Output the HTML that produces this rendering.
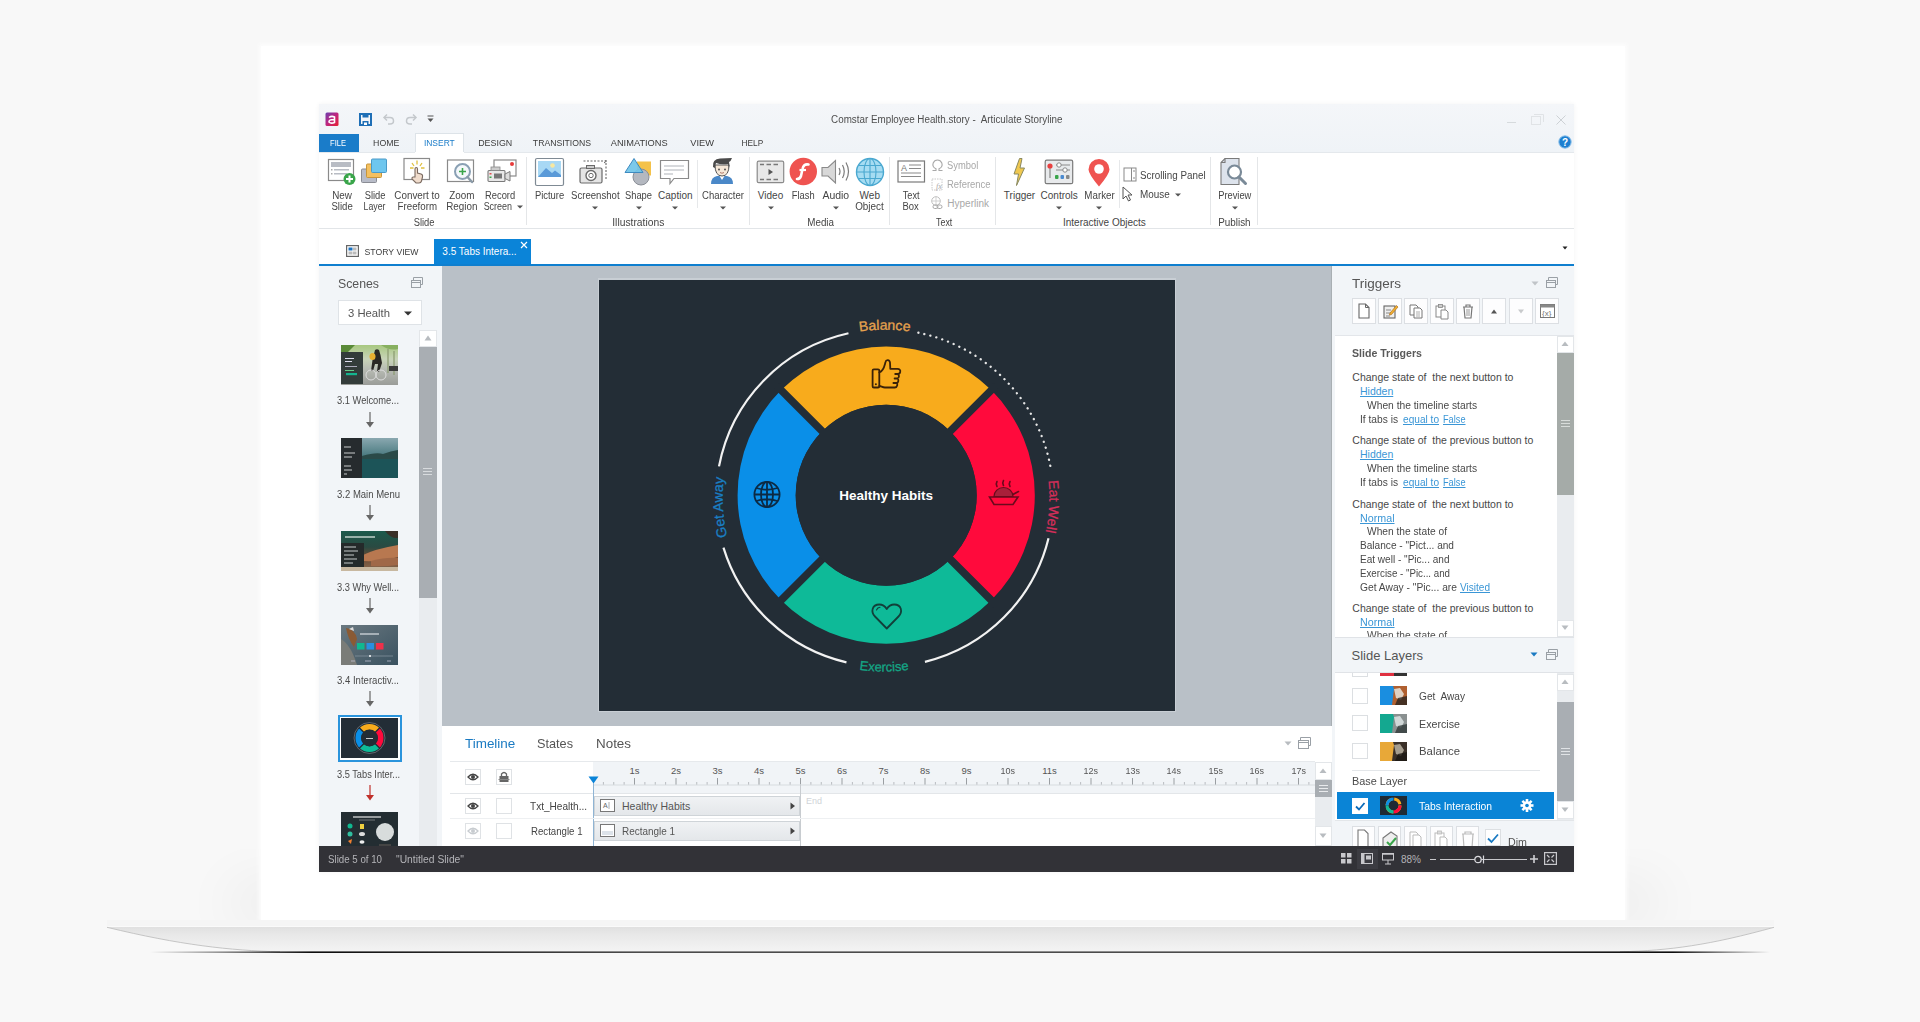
<!DOCTYPE html>
<html><head><meta charset="utf-8">
<style>
*{margin:0;padding:0;box-sizing:border-box}
html,body{width:1920px;height:1022px;overflow:hidden;background:#f8f8f8;font-family:"Liberation Sans",sans-serif}
#root{position:relative;width:1920px;height:1022px;overflow:hidden;background:#f8f8f8}
.a{position:absolute}
.t{position:absolute;white-space:pre;line-height:1;font-family:"Liberation Sans",sans-serif}
</style></head><body><div id="root">
<svg class="a" style="left:0px;top:780px" width="1920" height="200" viewBox="0 0 1920 200"><defs><filter id="sb" x="-20%" y="-100%" width="140%" height="300%"><feGaussianBlur stdDeviation="28"/></filter></defs><rect x="230" y="105" width="1430" height="36" fill="#000" opacity="0.06" filter="url(#sb)"/></svg>
<div class="a" style="left:261px;top:46px;width:1364px;height:874px;background:#fff;box-shadow:0 0 4px 2px #fdfdfd"></div>
<svg class="a" style="left:90px;top:912px" width="1710" height="50" viewBox="0 0 1710 50">
<defs>
<linearGradient id="bg1" x1="0" y1="0" x2="0" y2="1"><stop offset="0" stop-color="#e0e0e0"/><stop offset="0.3" stop-color="#e8e8e8"/><stop offset="1" stop-color="#f4f4f4"/></linearGradient>
<linearGradient id="dl" gradientUnits="userSpaceOnUse" x1="60" y1="0" x2="1680" y2="0"><stop offset="0" stop-color="#000" stop-opacity="0"/><stop offset="0.1" stop-color="#000" stop-opacity="0.95"/><stop offset="0.3" stop-color="#000" stop-opacity="0.7"/><stop offset="0.7" stop-color="#000" stop-opacity="0.7"/><stop offset="0.94" stop-color="#000" stop-opacity="0.95"/><stop offset="1" stop-color="#000" stop-opacity="0"/></linearGradient>
<filter id="bl"><feGaussianBlur stdDeviation="0.6"/></filter>
</defs>
<rect x="17" y="8" width="1667" height="7" fill="#f5f5f5"/>
<rect x="17" y="14" width="1667" height="1" fill="#fafafa"/>
<path d="M17 15 L1684 15 C1620 33 1580 38 1530 39.5 L190 40 C140 38 90 33 17 15 Z" fill="url(#bg1)"/>
<path d="M17 15.3 C90 33 140 38.5 190 39.8" fill="none" stroke="#b8b8b8" stroke-width="0.8"/>
<path d="M1684 15.3 C1620 33 1580 38.5 1530 39.8" fill="none" stroke="#b8b8b8" stroke-width="0.8"/>
<rect x="60" y="39.4" width="1620" height="1.6" fill="url(#dl)" filter="url(#bl)"/>
</svg>
<div class="a" style="left:319px;top:104px;width:1255px;height:768px;background:#fff;box-shadow:0 0 5px rgba(0,0,0,0.05)"></div>
<div class="a" style="left:319px;top:104px;width:1255px;height:48px;background:linear-gradient(180deg,#f4f6f9 0%,#eff3f7 100%)"></div>
<svg class="a" style="left:325px;top:112px" width="14" height="14" viewBox="0 0 14 14"><defs><linearGradient id="lg" x1="0" y1="0" x2="1" y2="1"><stop offset="0" stop-color="#6a3fb0"/><stop offset="0.5" stop-color="#c0267e"/><stop offset="1" stop-color="#e8202e"/></linearGradient></defs>
<rect x="0.5" y="0.5" width="13" height="13.5" rx="1.5" fill="url(#lg)"/>
<path d="M4 5.5 Q6.5 3.5 9.5 5 L9.5 10.5 Q6 12 4 10 Q3.5 7.5 9 7.5" fill="none" stroke="#fff" stroke-width="1.6"/></svg>
<svg class="a" style="left:359px;top:113px" width="13" height="13" viewBox="0 0 13 13"><rect x="1" y="1" width="11" height="11" fill="none" stroke="#1f6fb6" stroke-width="2"/><rect x="3.5" y="1" width="6" height="3.5" fill="#1f6fb6"/><rect x="3.5" y="8" width="6" height="4" fill="#1f6fb6"/><rect x="5" y="9.5" width="3" height="2.5" fill="#fff"/></svg>
<svg class="a" style="left:382px;top:113px" width="13" height="12" viewBox="0 0 13 12"><path d="M2.5 4.5 H8 Q11.5 4.5 11.5 8 Q11.5 11 8 11 H6" fill="none" stroke="#c4c8cc" stroke-width="1.5"/><path d="M5 1.5 L2 4.5 L5 7.5" fill="none" stroke="#c4c8cc" stroke-width="1.5"/></svg>
<svg class="a" style="left:405px;top:113px" width="13" height="12" viewBox="0 0 13 12"><path d="M10.5 4.5 H5 Q1.5 4.5 1.5 8 Q1.5 11 5 11 H7" fill="none" stroke="#c4c8cc" stroke-width="1.5"/><path d="M8 1.5 L11 4.5 L8 7.5" fill="none" stroke="#c4c8cc" stroke-width="1.5"/></svg>
<svg class="a" style="left:427px;top:115px" width="7" height="8" viewBox="0 0 7 8"><rect x="0.5" y="0.5" width="6" height="1" fill="#555"/><path d="M0.5 3.5 H6.5 L3.5 7Z" fill="#555"/></svg>
<div class="t" style="left:829.18px;top:115.20px;font-size:10px;color:#4e4e4e;transform:scaleX(0.982);transform-origin:50% 0;">Comstar Employee Health.story -  Articulate Storyline</div>
<div class="a" style="left:1507px;top:122px;width:9px;height:1px;background:#d6dadd"></div>
<svg class="a" style="left:1531px;top:114px" width="13" height="11" viewBox="0 0 13 11"><rect x="0.5" y="2.5" width="9" height="8" fill="none" stroke="#e0e3e6"/><path d="M3 0.5 H12.5 V8" fill="none" stroke="#e0e3e6"/></svg>
<svg class="a" style="left:1555px;top:114px" width="12" height="12" viewBox="0 0 12 12"><path d="M1.5 1.5 L10.5 10.5 M10.5 1.5 L1.5 10.5" stroke="#cdd1d5" stroke-width="1"/></svg>
<svg class="a" style="left:1558px;top:135px" width="14" height="14" viewBox="0 0 14 14"><circle cx="7" cy="7" r="6.2" fill="#1d7fd0" stroke="#8cc0ea" stroke-width="1"/><text x="7" y="10.8" font-family="Liberation Sans" font-weight="bold" font-size="10" fill="#fff" text-anchor="middle">?</text></svg>
<div class="a" style="left:319px;top:134px;width:40px;height:18px;background:#1a7cc9"></div>
<div class="t" style="left:328.47px;top:138.41px;font-size:9.5px;color:#fff;transform:scaleX(0.798);transform-origin:50% 0;">FILE</div>
<div class="a" style="left:415px;top:133px;width:49px;height:20px;background:#fff;border:1px solid #dde3e8;border-bottom:none"></div>
<div class="t" style="left:371.75px;top:138.11px;font-size:9.5px;color:#3c3c3c;transform:scaleX(0.923);transform-origin:50% 0;">HOME</div>
<div class="t" style="left:422.17px;top:138.11px;font-size:9.5px;color:#1a7cc9;transform:scaleX(0.889);transform-origin:50% 0;">INSERT</div>
<div class="t" style="left:476.99px;top:138.11px;font-size:9.5px;color:#3c3c3c;transform:scaleX(0.933);transform-origin:50% 0;">DESIGN</div>
<div class="t" style="left:530.07px;top:138.11px;font-size:9.5px;color:#3c3c3c;transform:scaleX(0.911);transform-origin:50% 0;">TRANSITIONS</div>
<div class="t" style="left:609.99px;top:138.11px;font-size:9.5px;color:#3c3c3c;transform:scaleX(0.974);transform-origin:50% 0;">ANIMATIONS</div>
<div class="t" style="left:690.36px;top:138.11px;font-size:9.5px;color:#3c3c3c;transform:scaleX(0.976);transform-origin:50% 0;">VIEW</div>
<div class="t" style="left:739.79px;top:138.11px;font-size:9.5px;color:#3c3c3c;transform:scaleX(0.870);transform-origin:50% 0;">HELP</div>
<div class="a" style="left:319px;top:152px;width:1255px;height:1px;background:#e4e8ec"></div>
<div class="a" style="left:415px;top:152px;width:49px;height:1px;background:#fff"></div>
<div class="a" style="left:319px;top:228px;width:1255px;height:1px;background:#e2e5e8"></div>
<svg class="a" style="left:346px;top:245px" width="13" height="12" viewBox="0 0 13 12"><rect x="0.6" y="0.6" width="11.8" height="10.8" fill="#fff" stroke="#666" stroke-width="1.2"/><rect x="2.5" y="2.5" width="4" height="3" fill="#1d72c0"/><rect x="7" y="2.5" width="3.5" height="3" fill="#bbb"/><rect x="2.5" y="6.5" width="4" height="3" fill="#bbb"/><rect x="7" y="6.5" width="3.5" height="3" fill="#bbb"/></svg>
<div class="t" style="left:361.94px;top:246.91px;font-size:9.5px;color:#3c3c3c;transform:scaleX(0.913);transform-origin:50% 0;">STORY VIEW</div>
<div class="a" style="left:434px;top:239px;width:97px;height:26px;background:#0b84d8"></div>
<div class="t" style="left:442.35px;top:247.00px;font-size:10px;color:#fff;transform-origin:50% 0;">3.5 Tabs Intera...</div>
<svg class="a" style="left:520px;top:241px" width="8" height="8" viewBox="0 0 8 8"><path d="M1 1 L7 7 M7 1 L1 7" stroke="#fff" stroke-width="1.2"/></svg>
<svg class="a" style="left:1562px;top:246px" width="6" height="5" viewBox="0 0 6 5"><path d="M0.5 0.5 H5.5 L3 3.5Z" fill="#222"/></svg>
<div class="a" style="left:319px;top:264px;width:1255px;height:2px;background:#0f7fcf"></div>
<div class="t" style="left:331.90px;top:190.70px;font-size:10px;color:#454545;transform:scaleX(0.985);transform-origin:50% 0;">New</div>
<div class="t" style="left:330.78px;top:202.00px;font-size:10px;color:#454545;transform:scaleX(0.958);transform-origin:50% 0;">Slide</div>
<div class="t" style="left:363.58px;top:190.70px;font-size:10px;color:#454545;transform:scaleX(0.935);transform-origin:50% 0;">Slide</div>
<div class="t" style="left:362.19px;top:202.00px;font-size:10px;color:#454545;transform:scaleX(0.876);transform-origin:50% 0;">Layer</div>
<div class="t" style="left:394.04px;top:190.70px;font-size:10px;color:#454545;transform:scaleX(0.984);transform-origin:50% 0;">Convert to</div>
<div class="t" style="left:396.82px;top:202.00px;font-size:10px;color:#454545;transform:scaleX(0.971);transform-origin:50% 0;">Freeform</div>
<div class="t" style="left:448.62px;top:190.70px;font-size:10px;color:#454545;transform:scaleX(0.986);transform-origin:50% 0;">Zoom</div>
<div class="t" style="left:445.56px;top:202.00px;font-size:10px;color:#454545;transform:scaleX(0.985);transform-origin:50% 0;">Region</div>
<div class="t" style="left:484.38px;top:190.70px;font-size:10px;color:#454545;transform:scaleX(0.934);transform-origin:50% 0;">Record</div>
<div class="t" style="left:481.66px;top:202.00px;font-size:10px;color:#454545;transform:scaleX(0.896);transform-origin:50% 0;">Screen</div>
<svg class="a" style="left:516.7px;top:205.4px" width="6" height="4" viewBox="0 0 6 4"><path d="M0 0.5 H6 L3 3.5Z" fill="#555"/></svg>
<div class="t" style="left:413.38px;top:217.50px;font-size:10px;color:#454545;transform:scaleX(0.935);transform-origin:50% 0;">Slide</div>
<div class="a" style="left:526px;top:157px;width:1px;height:68px;background:#e4e6e8"></div>
<svg class="a" style="left:327px;top:158px" width="30" height="28" viewBox="0 0 30 28"><rect x="1.5" y="1.5" width="25" height="21" fill="#fff" stroke="#8a8a8a" stroke-width="1.2"/>
<rect x="4" y="4" width="20" height="5" fill="#b8bcc4"/><rect x="4" y="11" width="1.5" height="1.5" fill="#aaa"/><rect x="7" y="11" width="15" height="1.5" fill="#b8bcc4"/><rect x="4" y="15" width="1.5" height="1.5" fill="#aaa"/><rect x="7" y="15" width="13" height="1.5" fill="#b8bcc4"/>
<circle cx="22.5" cy="21" r="6" fill="#3aa54a"/><path d="M22.5 17.5V24.5M19 21H26" stroke="#fff" stroke-width="2"/></svg>
<svg class="a" style="left:360px;top:158px" width="30" height="28" viewBox="0 0 30 28"><rect x="1.5" y="11" width="15" height="13.5" rx="1" fill="#b8bcc8" stroke="#8a8c94" stroke-width="1"/>
<rect x="6.5" y="6" width="15" height="13.5" rx="1" fill="#f4c060" stroke="#c8963a" stroke-width="1"/>
<rect x="11.5" y="1" width="15" height="13.5" rx="1" fill="#6ec6ee" stroke="#4a9ac8" stroke-width="1"/></svg>
<svg class="a" style="left:402px;top:157px" width="30" height="30" viewBox="0 0 30 30"><rect x="2" y="1.5" width="25.5" height="21" fill="#fff" stroke="#8a8a8a" stroke-width="1.2"/>
<path d="M10 6L12 9M15 3.5V7.5M20 6L18 9M8 11H11.5M19 11H22.5" stroke="#e0c040" stroke-width="1.3"/>
<path d="M13 20 V12 Q13 10.5 14.3 10.5 Q15.5 10.5 15.5 12 V16 L19 17 Q21 17.7 20.5 20 L19.5 24 Q19 26 17 26 H14 L10 22 Q9.5 20.5 11 20 Z" fill="#f0dccc" stroke="#7a6a60" stroke-width="1.1"/></svg>
<svg class="a" style="left:446px;top:158px" width="30" height="28" viewBox="0 0 30 28"><rect x="1.5" y="2" width="26" height="21.5" fill="#fff" stroke="#8a8a8a" stroke-width="1.2"/>
<circle cx="16.5" cy="13.5" r="7.5" fill="#f4f8fb" stroke="#8aa0b4" stroke-width="2"/><path d="M16.5 10V17M13 13.5H20" stroke="#3aa54a" stroke-width="1.6"/>
<path d="M21.5 19L26 24" stroke="#8a9aa8" stroke-width="2.4" stroke-linecap="round"/></svg>
<svg class="a" style="left:487px;top:158px" width="30" height="28" viewBox="0 0 30 28"><rect x="7" y="2" width="22" height="16" fill="#fff" stroke="#8a8a8a" stroke-width="1.2"/><circle cx="25" cy="6" r="2" fill="#e83a3a"/>
<rect x="1" y="12.5" width="17" height="11" rx="1" fill="#e8e8e8" stroke="#7a7a7a" stroke-width="1.1"/><rect x="4" y="9" width="9" height="3.5" fill="#ccc" stroke="#888" stroke-width="0.8"/>
<rect x="7" y="15.5" width="8" height="5" fill="#777"/><rect x="2.5" y="15" width="2" height="1.5" fill="#e05050"/><rect x="2.5" y="18.5" width="2" height="1.5" fill="#3aa54a"/>
<path d="M18 16 L23 13.5 V23 L18 20.5Z" fill="#ddd" stroke="#7a7a7a" stroke-width="1"/></svg>
<div class="t" style="left:534.34px;top:190.70px;font-size:10px;color:#454545;transform:scaleX(0.941);transform-origin:50% 0;">Picture</div>
<div class="t" style="left:569.51px;top:190.70px;font-size:10px;color:#454545;transform:scaleX(0.959);transform-origin:50% 0;">Screenshot</div>
<svg class="a" style="left:591.8px;top:206px" width="6" height="4" viewBox="0 0 6 4"><path d="M0 0.5 H6 L3 3.5Z" fill="#555"/></svg>
<div class="t" style="left:624.04px;top:190.70px;font-size:10px;color:#454545;transform:scaleX(0.934);transform-origin:50% 0;">Shape</div>
<svg class="a" style="left:635.5px;top:206px" width="6" height="4" viewBox="0 0 6 4"><path d="M0 0.5 H6 L3 3.5Z" fill="#555"/></svg>
<div class="t" style="left:658.07px;top:190.70px;font-size:10px;color:#454545;transform-origin:50% 0;">Caption</div>
<svg class="a" style="left:672.3px;top:206px" width="6" height="4" viewBox="0 0 6 4"><path d="M0 0.5 H6 L3 3.5Z" fill="#555"/></svg>
<div class="a" style="left:697px;top:160px;width:1px;height:48px;background:#e6e8ea"></div>
<div class="t" style="left:700.65px;top:190.70px;font-size:10px;color:#454545;transform:scaleX(0.954);transform-origin:50% 0;">Character</div>
<svg class="a" style="left:719.6px;top:206px" width="6" height="4" viewBox="0 0 6 4"><path d="M0 0.5 H6 L3 3.5Z" fill="#555"/></svg>
<div class="t" style="left:613.21px;top:217.50px;font-size:10px;color:#454545;transform:scaleX(1.030);transform-origin:50% 0;">Illustrations</div>
<div class="a" style="left:748.5px;top:157px;width:1px;height:68px;background:#e4e6e8"></div>
<svg class="a" style="left:534px;top:157px" width="31" height="30" viewBox="0 0 31 30"><rect x="1.5" y="1.5" width="28" height="27" rx="1.5" fill="#fff" stroke="#7f8a94" stroke-width="1.2"/>
<rect x="4" y="4" width="23" height="16" fill="#a8d8f4"/><path d="M4 20 L12 11 L18 16 L21 13.5 L27 18 V20Z" fill="#5a9ad8"/><circle cx="18.5" cy="8.5" r="2.3" fill="#f8e8a0"/></svg>
<svg class="a" style="left:579px;top:160px" width="30" height="26" viewBox="0 0 30 26"><path d="M4.5 1 H27 V19 M22 1 L26 1" fill="none" stroke="#666" stroke-width="1.1" stroke-dasharray="2 1.5"/><path d="M25 -1 L27.5 1 L25 3" fill="none" stroke="#666" stroke-width="1"/>
<rect x="1" y="8" width="22" height="15" rx="1.5" fill="#e4e4e4" stroke="#6a6a6a" stroke-width="1.2"/><rect x="7.5" y="5.5" width="8" height="3" fill="#ccc" stroke="#6a6a6a" stroke-width="1"/>
<circle cx="12" cy="15.5" r="5" fill="#fff" stroke="#6a6a6a" stroke-width="1.4"/><circle cx="12" cy="15.5" r="2.2" fill="none" stroke="#6a6a6a" stroke-width="1"/></svg>
<svg class="a" style="left:624px;top:158px" width="30" height="28" viewBox="0 0 30 28"><rect x="13" y="3.5" width="14" height="14" fill="#f4c24a"/>
<circle cx="17" cy="19" r="8" fill="#b4b8c0" stroke="#8a8e96" stroke-width="1"/>
<path d="M10 0.5 L19 14.5 H1Z" fill="#70c4e8" stroke="#3e8ac0" stroke-width="1" fill-opacity="0.92"/></svg>
<svg class="a" style="left:659px;top:159px" width="31" height="27" viewBox="0 0 31 27"><path d="M1.5 1.5 H29.5 V19.5 H15 L11 24.5 V19.5 H1.5Z" fill="#fff" stroke="#8a8a8a" stroke-width="1.2"/>
<path d="M5 7H25M5 11H25M5 15H14" stroke="#b0b4ba" stroke-width="1.1"/></svg>
<svg class="a" style="left:709px;top:157px" width="26" height="30" viewBox="0 0 26 30"><path d="M2 27 Q2 20 8 19 L18 19 Q24 20 24 27Z" fill="#4a88c8"/><path d="M10.5 19 L13 23 L15.5 19Z" fill="#fff"/>
<path d="M6 8 Q6 19 13 19 Q20 19 20 8Z" fill="#f6e8d8" stroke="#555" stroke-width="1"/>
<path d="M4 10 Q3 2 11 1.5 L23 1 Q22 4 20 5 Q21 8 20 11 L19 7 Q12 8 7 6 Q6 9 6 11Z" fill="#4a4a4a"/>
<circle cx="10" cy="12.5" r="0.9" fill="#444"/><circle cx="16" cy="12.5" r="0.9" fill="#444"/><path d="M11 15.5 Q13 17 15 15.5" fill="none" stroke="#a06050" stroke-width="0.8"/></svg>
<div class="t" style="left:757.80px;top:190.70px;font-size:10px;color:#454545;transform-origin:50% 0;">Video</div>
<svg class="a" style="left:767.5px;top:205.5px" width="6" height="4" viewBox="0 0 6 4"><path d="M0 0.5 H6 L3 3.5Z" fill="#555"/></svg>
<div class="t" style="left:790.77px;top:190.70px;font-size:10px;color:#454545;transform:scaleX(0.932);transform-origin:50% 0;">Flash</div>
<div class="t" style="left:822.81px;top:190.70px;font-size:10px;color:#454545;transform:scaleX(1.044);transform-origin:50% 0;">Audio</div>
<svg class="a" style="left:832.6px;top:205.5px" width="6" height="4" viewBox="0 0 6 4"><path d="M0 0.5 H6 L3 3.5Z" fill="#555"/></svg>
<div class="t" style="left:859.61px;top:190.70px;font-size:10px;color:#454545;transform-origin:50% 0;">Web</div>
<div class="t" style="left:855.35px;top:202.00px;font-size:10px;color:#454545;transform:scaleX(0.990);transform-origin:50% 0;">Object</div>
<div class="t" style="left:806.98px;top:217.50px;font-size:10px;color:#454545;transform:scaleX(0.980);transform-origin:50% 0;">Media</div>
<div class="a" style="left:888.5px;top:157px;width:1px;height:68px;background:#e4e6e8"></div>
<svg class="a" style="left:756px;top:160px" width="29" height="24" viewBox="0 0 29 24"><rect x="1.2" y="1.2" width="26.5" height="21.5" rx="1.5" fill="#e8e8e8" stroke="#8a8a8a" stroke-width="1.2"/>
<path d="M4 4.5H8M10.5 4.5H15M17.5 4.5H22M4 19.5H8M10.5 19.5H15M17.5 19.5H22" stroke="#777" stroke-width="1.6"/><path d="M12.5 9 L17 12 L12.5 15Z" fill="#555"/></svg>
<svg class="a" style="left:789px;top:157px" width="29" height="29" viewBox="0 0 29 29"><circle cx="14.3" cy="14.5" r="13.7" fill="#ef5350"/><path d="M19.5 7.5 Q14.5 6.5 13.5 12 L12 19 Q11 22 8 22" fill="none" stroke="#fff" stroke-width="2.6" stroke-linecap="round"/><path d="M10.5 13 H17" stroke="#fff" stroke-width="2.2"/></svg>
<svg class="a" style="left:821px;top:159px" width="30" height="26" viewBox="0 0 30 26"><path d="M1 8.5 H7 L14.5 1.5 V24 L7 17 H1Z" fill="#d8d8d8" stroke="#8a8a8a" stroke-width="1.1"/>
<path d="M18 9 Q20 12.5 18 16M21.5 6 Q25 12.5 21.5 19M25 3.5 Q30 12.5 25 21.5" fill="none" stroke="#7a7a7a" stroke-width="1.2"/></svg>
<svg class="a" style="left:855px;top:157px" width="30" height="30" viewBox="0 0 30 30"><circle cx="15" cy="15" r="13.5" fill="#a6dcf2" stroke="#4aa8d0" stroke-width="1.4"/><ellipse cx="15" cy="15" rx="6" ry="13.5" fill="none" stroke="#4aa8d0" stroke-width="1.1"/>
<path d="M15 1.5V28.5M1.5 15H28.5M3.5 8.5H26.5M3.5 21.5H26.5" stroke="#4aa8d0" stroke-width="1.1"/></svg>
<div class="t" style="left:901.93px;top:190.70px;font-size:10px;color:#454545;transform:scaleX(0.922);transform-origin:50% 0;">Text</div>
<div class="t" style="left:902.48px;top:202.00px;font-size:10px;color:#454545;transform:scaleX(0.946);transform-origin:50% 0;">Box</div>
<svg class="a" style="left:897px;top:160px" width="29" height="24" viewBox="0 0 29 24"><rect x="1" y="1" width="26.5" height="21" fill="#fff" stroke="#7a7a7a" stroke-width="1.2"/>
<text x="4" y="10.5" font-family="Liberation Sans" font-size="9" fill="#777">A</text><path d="M12 5H24M12 8.5H24M4 13H24M4 16.5H24" stroke="#8a8a8a" stroke-width="1.1"/></svg>
<svg class="a" style="left:931px;top:159px" width="13" height="13" viewBox="0 0 13 13"><path d="M1.5 11.5 H5 V9.8 C2.3 8.5 1.5 6 2.2 4 C3 2 4.8 1 6.5 1 C8.2 1 10 2 10.8 4 C11.5 6 10.7 8.5 8 9.8 V11.5 H11.5" fill="none" stroke="#a8a8a8" stroke-width="1.1"/></svg>
<div class="t" style="left:947.3px;top:161.30px;font-size:10px;color:#a8a8a8;transform:scaleX(0.936);transform-origin:0 0;">Symbol</div>
<svg class="a" style="left:931px;top:178px" width="13" height="13" viewBox="0 0 13 13"><rect x="1" y="1" width="10" height="11" fill="none" stroke="#c8c8c8" stroke-width="1" stroke-dasharray="1.5 1"/><text x="5" y="11" font-family="Liberation Serif" font-style="italic" font-size="8" fill="#a8a8a8">fx</text></svg>
<div class="t" style="left:947.3px;top:180.20px;font-size:10px;color:#a8a8a8;transform:scaleX(0.945);transform-origin:0 0;">Reference</div>
<svg class="a" style="left:930px;top:196px" width="14" height="14" viewBox="0 0 14 14"><circle cx="6" cy="5" r="4.3" fill="none" stroke="#c0c0c0" stroke-width="1"/><path d="M2 5H10M6 0.7V9.3" stroke="#c8c8c8" stroke-width="0.8"/><rect x="3" y="9" width="5" height="3.5" rx="1.7" fill="none" stroke="#a8a8a8" stroke-width="1"/><rect x="7" y="9" width="5" height="3.5" rx="1.7" fill="none" stroke="#a8a8a8" stroke-width="1"/></svg>
<div class="t" style="left:947.3px;top:199.10px;font-size:10px;color:#a8a8a8;transform-origin:0 0;">Hyperlink</div>
<div class="t" style="left:935.13px;top:217.50px;font-size:10px;color:#454545;transform:scaleX(0.889);transform-origin:50% 0;">Text</div>
<div class="a" style="left:995px;top:157px;width:1px;height:68px;background:#e4e6e8"></div>
<div class="t" style="left:1003.85px;top:190.70px;font-size:10px;color:#454545;transform-origin:50% 0;">Trigger</div>
<div class="t" style="left:1040.58px;top:190.70px;font-size:10px;color:#454545;transform-origin:50% 0;">Controls</div>
<svg class="a" style="left:1056.2px;top:206px" width="6" height="4" viewBox="0 0 6 4"><path d="M0 0.5 H6 L3 3.5Z" fill="#555"/></svg>
<div class="t" style="left:1083.64px;top:190.70px;font-size:10px;color:#454545;transform:scaleX(0.977);transform-origin:50% 0;">Marker</div>
<svg class="a" style="left:1096.2px;top:206px" width="6" height="4" viewBox="0 0 6 4"><path d="M0 0.5 H6 L3 3.5Z" fill="#555"/></svg>
<div class="a" style="left:1118.5px;top:160px;width:1px;height:48px;background:#e6e8ea"></div>
<div class="t" style="left:1140px;top:170.50px;font-size:10px;color:#454545;transform:scaleX(0.983);transform-origin:0 0;">Scrolling Panel</div>
<div class="t" style="left:1140px;top:189.90px;font-size:10px;color:#454545;transform:scaleX(0.990);transform-origin:0 0;">Mouse</div>
<svg class="a" style="left:1175px;top:192.5px" width="6" height="4" viewBox="0 0 6 4"><path d="M0 0.5 H6 L3 3.5Z" fill="#555"/></svg>
<div class="t" style="left:1063.00px;top:217.50px;font-size:10px;color:#454545;transform-origin:50% 0;">Interactive Objects</div>
<div class="a" style="left:1209.5px;top:157px;width:1px;height:68px;background:#e4e6e8"></div>
<div class="t" style="left:1217.42px;top:190.70px;font-size:10px;color:#454545;transform:scaleX(0.931);transform-origin:50% 0;">Preview</div>
<svg class="a" style="left:1232.2px;top:206px" width="6" height="4" viewBox="0 0 6 4"><path d="M0 0.5 H6 L3 3.5Z" fill="#555"/></svg>
<div class="t" style="left:1218.40px;top:217.50px;font-size:10px;color:#454545;transform:scaleX(0.988);transform-origin:50% 0;">Publish</div>
<div class="a" style="left:1256.5px;top:157px;width:1px;height:68px;background:#e4e6e8"></div>
<svg class="a" style="left:1011px;top:157px" width="16" height="30" viewBox="0 0 16 30"><path d="M8.5 1.5 L3 17 H7.5 L5.5 28.5 L13.5 11 H9 L11 1.5Z" fill="#f0c850" stroke="#8a8a60" stroke-width="1"/></svg>
<svg class="a" style="left:1044px;top:159px" width="31" height="27" viewBox="0 0 31 27"><rect x="1.2" y="1.2" width="27.5" height="23.5" rx="1.5" fill="#e8eaec" stroke="#7a7a7a" stroke-width="1.2"/>
<path d="M6 7V19" stroke="#888" stroke-width="1.2"/><circle cx="6" cy="7" r="2.6" fill="#e84040"/>
<path d="M12 6H26M12 11H26" stroke="#8a8a8a" stroke-width="1.1"/><circle cx="15" cy="6" r="2.2" fill="#fff" stroke="#888"/><circle cx="21" cy="11" r="2.2" fill="#fff" stroke="#888"/>
<rect x="11" y="16" width="3.5" height="4" rx="1" fill="#3aa54a"/><rect x="16.5" y="16" width="3.5" height="4" rx="1" fill="#4a8ad0"/><rect x="22" y="16" width="3.5" height="4" rx="1" fill="#888"/></svg>
<svg class="a" style="left:1087px;top:158px" width="24" height="30" viewBox="0 0 24 30"><path d="M12 28.5 Q1.5 16 1.5 11.5 A10.5 10.5 0 0 1 22.5 11.5 Q22.5 16 12 28.5Z" fill="#ef5350"/><circle cx="12" cy="11" r="4.8" fill="#fff"/></svg>
<svg class="a" style="left:1123px;top:167px" width="14" height="15" viewBox="0 0 14 15"><rect x="1" y="1" width="12" height="13" fill="#fff" stroke="#8a8a8a"/><path d="M8.5 1V14" stroke="#8a8a8a"/><path d="M10 4H12M10 11H12" stroke="#8a8a8a"/></svg>
<svg class="a" style="left:1122px;top:186px" width="11" height="16" viewBox="0 0 11 16"><path d="M1 1 V13 L4 10 L6.5 15 L8.5 14 L6 9 H10Z" fill="#fff" stroke="#555" stroke-width="1"/></svg>
<svg class="a" style="left:1219px;top:157px" width="30" height="30" viewBox="0 0 30 30"><path d="M6 1.5 H20 V27.5 H2 V5.5Z" fill="#dde3ec" stroke="#7a7a7a" stroke-width="1.1"/><path d="M2 5.5 H6 V1.5" fill="none" stroke="#7a7a7a" stroke-width="1.1"/>
<circle cx="15.5" cy="15" r="6.5" fill="#fff" stroke="#7a8a98" stroke-width="2.2"/><path d="M20 20 L26.5 26.5" stroke="#7a8a98" stroke-width="3" stroke-linecap="round"/></svg>
<div class="a" style="left:319px;top:266px;width:123px;height:580px;background:#f2f5f8"></div>
<div class="t" style="left:337.5px;top:276.61px;font-size:13px;color:#555;transform:scaleX(0.946);transform-origin:0 0;">Scenes</div>
<svg class="a" style="left:411px;top:277px" width="12" height="11" viewBox="0 0 12 11"><rect x="0.5" y="3.5" width="9" height="7" fill="none" stroke="#9aa0a6"/><path d="M2.5 3.5V0.5H11.5V7.5H9.5" fill="none" stroke="#9aa0a6"/><path d="M0.5 5.5H9.5" stroke="#9aa0a6"/></svg>
<div class="a" style="left:338px;top:300px;width:84px;height:25px;background:#fff;border:1px solid #dfe3e7"></div>
<div class="t" style="left:348px;top:308.27px;font-size:11px;color:#555;transform:scaleX(1.025);transform-origin:0 0;">3 Health</div>
<svg class="a" style="left:404px;top:311px" width="8" height="5" viewBox="0 0 8 5"><path d="M0 0.5H8L4 4.5Z" fill="#333"/></svg>
<div class="a" style="left:419px;top:330px;width:18px;height:516px;background:#e9ecef"></div>
<div class="a" style="left:419px;top:330px;width:18px;height:17px;background:#fff;border:1px solid #e3e6e9"></div>
<svg class="a" style="left:424px;top:335px" width="8" height="6" viewBox="0 0 8 6"><path d="M4 0.5L7.5 5.5H0.5Z" fill="#b8bcc0"/></svg>
<div class="a" style="left:419px;top:347px;width:18px;height:251px;background:#a9aeb3"></div>
<svg class="a" style="left:423px;top:467px" width="9" height="10" viewBox="0 0 9 10"><path d="M0 1.5H9M0 4.5H9M0 7.5H9" stroke="#d8dbde" stroke-width="1.2"/></svg>
<svg class="a" style="left:341px;top:344.5px" width="57" height="40" viewBox="0 0 57 40"><defs><linearGradient id="t1" x1="0" y1="0" x2="0" y2="1"><stop offset="0" stop-color="#a8c880"/><stop offset="0.35" stop-color="#c8d4b8"/><stop offset="0.6" stop-color="#b8bcb4"/><stop offset="1" stop-color="#9a9c98"/></linearGradient></defs>
<rect width="57" height="40" fill="url(#t1)"/><path d="M0 0H14Q10 4 6 8H0Z" fill="#5a8a38"/><path d="M40 0 Q48 6 57 4 V0Z" fill="#88b060"/>
<rect x="0" y="7" width="22" height="32" fill="#333c3a"/><rect x="5" y="28" width="11" height="2.2" fill="#14b48e"/><rect x="4" y="13" width="9" height="1" fill="#dde"/><rect x="4" y="16" width="7" height="1" fill="#dde"/><rect x="4" y="21" width="12" height="1" fill="#aab"/><rect x="4" y="25" width="9" height="1" fill="#6c8"/>
<path d="M34 5 Q36 3.5 38 5 L39.5 10 L41 18 L38 27 L36 26.5 L37 19 L34 19 L32 26 L30 26 L31.5 15Z" fill="#2a2824"/><ellipse cx="31.5" cy="11.5" rx="3" ry="3.5" fill="#e8b030"/>
<circle cx="30" cy="30" r="5" fill="none" stroke="#ddd" stroke-width="1"/><circle cx="40" cy="30" r="5" fill="none" stroke="#ddd" stroke-width="1"/>
<path d="M47 4 V28 M53 6 V30" stroke="#8a9a70" stroke-width="1.2"/><rect x="48" y="21" width="9" height="5" fill="#3a3a3a"/></svg>
<svg class="a" style="left:341px;top:438px" width="57" height="40" viewBox="0 0 57 40"><defs><linearGradient id="t2" x1="0" y1="0" x2="0" y2="1"><stop offset="0" stop-color="#8aa8b0"/><stop offset="0.45" stop-color="#4a7a80"/><stop offset="1" stop-color="#1a4a50"/></linearGradient></defs>
<rect width="57" height="40" fill="url(#t2)"/><path d="M21 18 Q35 14 42 16 Q50 13 57 12 V22 H21Z" fill="#2a4a48"/><rect x="21" y="21" width="36" height="19" fill="#1c5458"/>
<rect x="0" y="0" width="21" height="40" fill="#262b2e"/><path d="M3 9H10M3 15H14M3 19H11M3 28H10M3 32H11M3 36H6" stroke="#c8cccc" stroke-width="1"/></svg>
<svg class="a" style="left:341px;top:531.3px" width="57" height="40" viewBox="0 0 57 40"><defs><linearGradient id="t3" x1="0" y1="0" x2="0" y2="1"><stop offset="0" stop-color="#1c5a4c"/><stop offset="0.4" stop-color="#2a4a42"/><stop offset="0.65" stop-color="#6a4a34"/><stop offset="1" stop-color="#8a6a50"/></linearGradient></defs>
<rect width="57" height="40" fill="url(#t3)"/><path d="M22 24 Q34 18 57 14 V26 Q40 31 22 30Z" fill="#b87850"/><path d="M30 30 Q45 26 57 27 V34 Q42 36 30 35Z" fill="#a06848"/><path d="M44 0 Q50 8 57 7 V0Z" fill="#3a3028"/><rect x="0" y="36" width="57" height="4" fill="#c8b8a0"/>
<path d="M4 6H34" stroke="#e8f0ec" stroke-width="1.2"/><rect x="0" y="12" width="23" height="24" fill="#242a2a"/><path d="M3 16H15M3 20H17M3 24H13M3 28H16M3 32H12" stroke="#d8dcdc" stroke-width="0.9"/></svg>
<svg class="a" style="left:341px;top:624.6px" width="57" height="40" viewBox="0 0 57 40"><defs><linearGradient id="t4" x1="0" y1="0" x2="1" y2="1"><stop offset="0" stop-color="#6a7880"/><stop offset="1" stop-color="#3a5260"/></linearGradient></defs>
<rect width="57" height="40" fill="url(#t4)"/><path d="M0 14 Q10 20 16 40 H0Z" fill="#7a7c78"/><path d="M5 3 Q14 4 16 14 L13 22 Q7 14 5 3Z" fill="#8a5a34"/><path d="M8 4 L12 2 L13 6Z" fill="#ddd"/>
<path d="M19 9H38" stroke="#e8ecee" stroke-width="1.1"/><rect x="16" y="18" width="7.5" height="6.5" fill="#10b890"/><rect x="25.5" y="18" width="7.5" height="6.5" fill="#2a90e0"/><rect x="35" y="18" width="7.5" height="6.5" fill="#f0304a"/>
<path d="M14 31H52" stroke="#8a9aa4" stroke-width="0.7"/><circle cx="29" cy="31" r="1" fill="#fff"/><path d="M10 36H14M24 36H30M46 36H50" stroke="#ccd" stroke-width="0.7"/></svg>
<div class="a" style="left:338px;top:715px;width:64px;height:47px;border:2px solid #2a94dc;background:#fff"></div>
<svg class="a" style="left:341px;top:718px" width="57" height="40" viewBox="0 0 57 40"><rect width="57" height="40" fill="#232d36"/><g transform="translate(28.5 20)">
<path d="M-9.9 -9.9 A14 14 0 0 1 9.9 -9.9 L6 -6 A8.5 8.5 0 0 0 -6 -6Z" fill="#f8ab1c"/><path d="M9.9 -9.9 A14 14 0 0 1 9.9 9.9 L6 6 A8.5 8.5 0 0 0 6 -6Z" fill="#ff0a3c"/>
<path d="M9.9 9.9 A14 14 0 0 1 -9.9 9.9 L-6 6 A8.5 8.5 0 0 0 6 6Z" fill="#0eba98"/><path d="M-9.9 9.9 A14 14 0 0 1 -9.9 -9.9 L-6 -6 A8.5 8.5 0 0 0 -6 6Z" fill="#0a8fe8"/>
<path d="M-12 -12L12 12M12 -12L-12 12" stroke="#232d36" stroke-width="1.3"/><circle r="8.3" fill="#232d36"/><circle r="15.5" fill="none" stroke="#bbb" stroke-width="0.4"/><path d="M-3.5 0.5H3.5" stroke="#ddd" stroke-width="0.9"/></g></svg>
<svg class="a" style="left:341px;top:812px" width="57" height="40" viewBox="0 0 57 40"><rect width="57" height="40" fill="#232d32"/><path d="M12 5H40" stroke="#e8e8e8" stroke-width="1.2"/><path d="M18 8H34" stroke="#aaa" stroke-width="0.6"/>
<circle cx="9" cy="14" r="2.5" fill="#10b890"/><rect x="19" y="12" width="4" height="5" fill="#f0d040"/><circle cx="9" cy="22" r="2.5" fill="#30c0a0"/><ellipse cx="21" cy="22" rx="3" ry="2" fill="#ddd"/>
<path d="M7 29 L11 27 L10 32Z" fill="#f08030"/><ellipse cx="21" cy="30" rx="2.5" ry="1.8" fill="#eee"/><circle cx="44" cy="20" r="9" fill="#d8dcdc"/><rect x="38" y="32" width="12" height="3" fill="#444"/></svg>
<div class="t" style="left:337px;top:396.20px;font-size:10px;color:#4a4a4a;transform:scaleX(0.932);transform-origin:0 0;">3.1 Welcome...</div>
<div class="t" style="left:337px;top:489.70px;font-size:10px;color:#4a4a4a;transform:scaleX(0.952);transform-origin:0 0;">3.2 Main Menu</div>
<div class="t" style="left:337px;top:583.00px;font-size:10px;color:#4a4a4a;transform:scaleX(0.925);transform-origin:0 0;">3.3 Why Well...</div>
<div class="t" style="left:337px;top:676.20px;font-size:10px;color:#4a4a4a;transform:scaleX(0.956);transform-origin:0 0;">3.4 Interactiv...</div>
<div class="t" style="left:337px;top:769.70px;font-size:10px;color:#4a4a4a;transform:scaleX(0.924);transform-origin:0 0;">3.5 Tabs Inter...</div>
<svg class="a" style="left:365px;top:411.5px" width="10" height="17" viewBox="0 0 10 17"><path d="M5 0V14" stroke="#666" stroke-width="1.2"/><path d="M1 10L5 15.5L9 10Z" fill="#666"/></svg>
<svg class="a" style="left:365px;top:504.5px" width="10" height="17" viewBox="0 0 10 17"><path d="M5 0V14" stroke="#666" stroke-width="1.2"/><path d="M1 10L5 15.5L9 10Z" fill="#666"/></svg>
<svg class="a" style="left:365px;top:598px" width="10" height="17" viewBox="0 0 10 17"><path d="M5 0V14" stroke="#666" stroke-width="1.2"/><path d="M1 10L5 15.5L9 10Z" fill="#666"/></svg>
<svg class="a" style="left:365px;top:691px" width="10" height="17" viewBox="0 0 10 17"><path d="M5 0V14" stroke="#666" stroke-width="1.2"/><path d="M1 10L5 15.5L9 10Z" fill="#666"/></svg>
<svg class="a" style="left:365px;top:784.5px" width="10" height="17" viewBox="0 0 10 17"><path d="M5 0V14" stroke="#c0302a" stroke-width="1.2"/><path d="M1 10L5 15.5L9 10Z" fill="#c0302a"/></svg>
<div class="a" style="left:442px;top:266px;width:890px;height:460px;background:#b9c0c7"></div>
<div class="a" style="left:598px;top:278px;width:578px;height:434px;background:#c8ced4"></div>
<svg class="a" style="left:599px;top:279px" width="576" height="432" viewBox="0 0 576 432"><rect y="1" width="576" height="431" fill="#232d36"/>
<path d="M182.12 111.12A148.6 148.6 0 0 1 392.28 111.12L351.19 152.21A90.5 90.5 0 0 0 223.21 152.21Z" fill="#f8ab1c"/>
<path d="M392.28 111.12A148.6 148.6 0 0 1 392.28 321.28L351.19 280.19A90.5 90.5 0 0 0 351.19 152.21Z" fill="#ff0a3c"/>
<path d="M392.28 321.28A148.6 148.6 0 0 1 182.12 321.28L223.21 280.19A90.5 90.5 0 0 0 351.19 280.19Z" fill="#0eba98"/>
<path d="M182.12 321.28A148.6 148.6 0 0 1 182.12 111.12L223.21 152.21A90.5 90.5 0 0 0 223.21 280.19Z" fill="#0a8fe8"/>
<rect x="132.2" y="212.39999999999998" width="310" height="7.6" fill="#232d36" transform="rotate(45 287.2 216.2)"/>
<rect x="132.2" y="212.39999999999998" width="310" height="7.6" fill="#232d36" transform="rotate(-45 287.2 216.2)"/>
<circle cx="287.2" cy="216.2" r="90.5" fill="#232d36"/>
<path d="M119.99 187.39A168.7 168.7 0 0 1 249.47 54.24 M449.53 259.24A168.7 168.7 0 0 1 325.94 382.83 M247.46 383.31A168.7 168.7 0 0 1 124.46 268.60" fill="none" stroke="#f2f2f2" stroke-width="2.2"/>
<path d="M319.33 53.69A168.7 168.7 0 0 1 451.84 189.71" fill="none" stroke="#e6e6e6" stroke-width="2.3" stroke-dasharray="0.1 6.1" stroke-linecap="round"/>
<defs><path id="tp1" d="M127.55 161.44A168.3 168.3 0 0 1 443.85 161.44"/><path id="tp2" d="M349.75 67.37A164.6 164.6 0 0 1 334.10 376.32"/><path id="tp3" d="M239.15 374.17A162 162 0 0 1 221.62 70.21"/><path id="tp4" d="M122.46 277.77A173.5 173.5 0 0 0 448.53 278.91"/></defs>
<text font-family="Liberation Sans" font-size="14" fill="#e5a24e" stroke="#e5a24e" stroke-width="0.3"><textPath href="#tp1" startOffset="50%" text-anchor="middle">Balance</textPath></text>
<text font-family="Liberation Sans" font-size="14" fill="#d42e5a" stroke="#d42e5a" stroke-width="0.3"><textPath href="#tp2" startOffset="50%" text-anchor="middle">Eat Well</textPath></text>
<text font-family="Liberation Sans" font-size="14" fill="#1a7fc4" stroke="#1a7fc4" stroke-width="0.3"><textPath href="#tp3" startOffset="50%" text-anchor="middle">Get Away</textPath></text>
<text font-family="Liberation Sans" font-size="13" fill="#14a585" stroke="#14a585" stroke-width="0.3"><textPath href="#tp4" startOffset="50%" text-anchor="middle">Exercise</textPath></text>
<text x="287.2" y="221.0" font-family="Liberation Sans" font-weight="bold" font-size="13.5" fill="#fff" text-anchor="middle">Healthy Habits</text>
<rect x="273.6" y="90.3" width="6.7" height="18.2" rx="1.3" fill="none" stroke="#3a2208" stroke-width="1.8"/>
<path d="M280.3 93.3 C283 92.5 285 89 286 85 L286.5 83 C287 80.3 290.6 80.3 291 83.5 L291.3 89.8 H298.5 C300.6 89.8 301.6 91.2 301.2 93 C300.9 94.5 300 95 298.5 95 H296.2 M298.5 95 C300.6 95.4 300.4 99.2 298.3 99.5 H295.6 M298.3 99.5 C300 100 299.7 103.8 297.6 104 H294.4 M297.6 104 C299 104.6 298.4 108.5 295.8 108.5 H286 C283.5 108.5 282.3 107.2 280.3 107" fill="none" stroke="#3a2208" stroke-width="1.8" stroke-linejoin="round" stroke-linecap="round"/>
<circle cx="276.9" cy="105.3" r="1" fill="#3a2208"/>
<g fill="none" stroke="#0c2a44" stroke-width="1.8"><circle cx="168" cy="215.5" r="12.6"/><ellipse cx="168" cy="215.5" rx="6" ry="12.6"/><path d="M168 202.9V228.1M155.4 215.5H180.6M157.5 209Q168 212.5 178.5 209M157.5 222Q168 218.5 178.5 222"/></g>
<g fill="none" stroke="#6a0a1c" stroke-width="1.6" stroke-linecap="round"><path d="M390.5 218H419L414 225.5H395Z"/><path d="M398 207.5Q396.5 205 398 202.5M404.5 206.5Q403 204 404.5 201.5M411 207.5Q409.5 205 411 202.5"/><path d="M412 216.5L419.5 212.5"/></g><path d="M395 217.5 A9.5 9 0 0 1 414 217.5Z" fill="#a8203a" stroke="#6a0a1c" stroke-width="1.2"/>
<path d="M287.75 349.5 L276 337.5 C271.5 333 273 325.5 280.3 325.5 C284.3 325.5 286.7 328.3 287.75 330 C288.8 328.3 291.2 325.5 295.2 325.5 C302.5 325.5 304 333 299.5 337.5 Z" fill="none" stroke="#12403a" stroke-width="1.8" stroke-linejoin="round"/><path d="M277.5 331 Q278.5 328.5 281 328.3" fill="none" stroke="#12403a" stroke-width="1.1" stroke-linecap="round"/>
</svg>
<div class="a" style="left:442px;top:726px;width:890px;height:120px;background:#fff"></div>
<div class="t" style="left:465.2px;top:737.21px;font-size:13px;color:#1a7ac2;transform:scaleX(1.034);transform-origin:0 0;">Timeline</div>
<div class="t" style="left:537.3px;top:737.21px;font-size:13px;color:#555;transform:scaleX(0.977);transform-origin:0 0;">States</div>
<div class="t" style="left:595.5px;top:737.21px;font-size:13px;color:#555;transform:scaleX(1.031);transform-origin:0 0;">Notes</div>
<svg class="a" style="left:1284px;top:741px" width="8" height="6" viewBox="0 0 8 6"><path d="M0.5 0.5H7.5L4 4.5Z" fill="#b8bcc0"/></svg>
<svg class="a" style="left:1298px;top:737px" width="13" height="12" viewBox="0 0 13 12"><rect x="0.5" y="3.5" width="10" height="8" fill="none" stroke="#9aa0a6"/><path d="M2.5 3.5V0.5H12.5V8.5H10.5" fill="none" stroke="#9aa0a6"/><path d="M0.5 5.5H10.5" stroke="#9aa0a6"/></svg>
<div class="a" style="left:450px;top:761px;width:865px;height:1px;background:#e6e9ec"></div>
<div class="a" style="left:593px;top:762px;width:722px;height:31px;background:#f1f4f7"></div>
<div class="a" style="left:450px;top:793px;width:865px;height:1px;background:#e3e6e9"></div>
<div class="a" style="left:465px;top:769px;width:16px;height:16px;background:#fff;border:1px solid #dfe2e5"></div>
<div class="a" style="left:496px;top:769px;width:16px;height:16px;background:#fff;border:1px solid #dfe2e5"></div>
<svg class="a" style="left:467px;top:772px" width="12" height="10" viewBox="0 0 12 10"><path d="M1 5 Q6 -0.5 11 5 Q6 10.5 1 5Z" fill="none" stroke="#444" stroke-width="1.3"/><circle cx="6" cy="5" r="2" fill="#444"/></svg>
<svg class="a" style="left:498px;top:771px" width="12" height="12" viewBox="0 0 12 12"><rect x="1.5" y="5" width="9" height="6" fill="#666"/><path d="M3.5 5V3 Q6 0 8.5 3V5" fill="none" stroke="#666" stroke-width="1.3"/><rect x="0.5" y="8" width="11" height="1" fill="#888"/></svg>
<svg class="a" style="left:593px;top:762px" width="722" height="24" viewBox="0 0 722 24"><rect x="9.88" y="20" width="1" height="3" fill="#b8bcc0"/><rect x="20.25" y="20" width="1" height="3" fill="#b8bcc0"/><rect x="30.62" y="20" width="1" height="3" fill="#b8bcc0"/><rect x="41.00" y="16" width="1" height="7" fill="#9a9ea2"/><rect x="51.38" y="20" width="1" height="3" fill="#b8bcc0"/><rect x="61.75" y="20" width="1" height="3" fill="#b8bcc0"/><rect x="72.12" y="20" width="1" height="3" fill="#b8bcc0"/><rect x="82.50" y="16" width="1" height="7" fill="#9a9ea2"/><rect x="92.88" y="20" width="1" height="3" fill="#b8bcc0"/><rect x="103.25" y="20" width="1" height="3" fill="#b8bcc0"/><rect x="113.62" y="20" width="1" height="3" fill="#b8bcc0"/><rect x="124.00" y="16" width="1" height="7" fill="#9a9ea2"/><rect x="134.38" y="20" width="1" height="3" fill="#b8bcc0"/><rect x="144.75" y="20" width="1" height="3" fill="#b8bcc0"/><rect x="155.12" y="20" width="1" height="3" fill="#b8bcc0"/><rect x="165.50" y="16" width="1" height="7" fill="#9a9ea2"/><rect x="175.88" y="20" width="1" height="3" fill="#b8bcc0"/><rect x="186.25" y="20" width="1" height="3" fill="#b8bcc0"/><rect x="196.62" y="20" width="1" height="3" fill="#b8bcc0"/><rect x="207.00" y="16" width="1" height="7" fill="#9a9ea2"/><rect x="217.38" y="20" width="1" height="3" fill="#b8bcc0"/><rect x="227.75" y="20" width="1" height="3" fill="#b8bcc0"/><rect x="238.12" y="20" width="1" height="3" fill="#b8bcc0"/><rect x="248.50" y="16" width="1" height="7" fill="#9a9ea2"/><rect x="258.88" y="20" width="1" height="3" fill="#b8bcc0"/><rect x="269.25" y="20" width="1" height="3" fill="#b8bcc0"/><rect x="279.62" y="20" width="1" height="3" fill="#b8bcc0"/><rect x="290.00" y="16" width="1" height="7" fill="#9a9ea2"/><rect x="300.38" y="20" width="1" height="3" fill="#b8bcc0"/><rect x="310.75" y="20" width="1" height="3" fill="#b8bcc0"/><rect x="321.12" y="20" width="1" height="3" fill="#b8bcc0"/><rect x="331.50" y="16" width="1" height="7" fill="#9a9ea2"/><rect x="341.88" y="20" width="1" height="3" fill="#b8bcc0"/><rect x="352.25" y="20" width="1" height="3" fill="#b8bcc0"/><rect x="362.62" y="20" width="1" height="3" fill="#b8bcc0"/><rect x="373.00" y="16" width="1" height="7" fill="#9a9ea2"/><rect x="383.38" y="20" width="1" height="3" fill="#b8bcc0"/><rect x="393.75" y="20" width="1" height="3" fill="#b8bcc0"/><rect x="404.12" y="20" width="1" height="3" fill="#b8bcc0"/><rect x="414.50" y="16" width="1" height="7" fill="#9a9ea2"/><rect x="424.88" y="20" width="1" height="3" fill="#b8bcc0"/><rect x="435.25" y="20" width="1" height="3" fill="#b8bcc0"/><rect x="445.62" y="20" width="1" height="3" fill="#b8bcc0"/><rect x="456.00" y="16" width="1" height="7" fill="#9a9ea2"/><rect x="466.38" y="20" width="1" height="3" fill="#b8bcc0"/><rect x="476.75" y="20" width="1" height="3" fill="#b8bcc0"/><rect x="487.12" y="20" width="1" height="3" fill="#b8bcc0"/><rect x="497.50" y="16" width="1" height="7" fill="#9a9ea2"/><rect x="507.88" y="20" width="1" height="3" fill="#b8bcc0"/><rect x="518.25" y="20" width="1" height="3" fill="#b8bcc0"/><rect x="528.62" y="20" width="1" height="3" fill="#b8bcc0"/><rect x="539.00" y="16" width="1" height="7" fill="#9a9ea2"/><rect x="549.38" y="20" width="1" height="3" fill="#b8bcc0"/><rect x="559.75" y="20" width="1" height="3" fill="#b8bcc0"/><rect x="570.12" y="20" width="1" height="3" fill="#b8bcc0"/><rect x="580.50" y="16" width="1" height="7" fill="#9a9ea2"/><rect x="590.88" y="20" width="1" height="3" fill="#b8bcc0"/><rect x="601.25" y="20" width="1" height="3" fill="#b8bcc0"/><rect x="611.62" y="20" width="1" height="3" fill="#b8bcc0"/><rect x="622.00" y="16" width="1" height="7" fill="#9a9ea2"/><rect x="632.38" y="20" width="1" height="3" fill="#b8bcc0"/><rect x="642.75" y="20" width="1" height="3" fill="#b8bcc0"/><rect x="653.12" y="20" width="1" height="3" fill="#b8bcc0"/><rect x="663.50" y="16" width="1" height="7" fill="#9a9ea2"/><rect x="673.88" y="20" width="1" height="3" fill="#b8bcc0"/><rect x="684.25" y="20" width="1" height="3" fill="#b8bcc0"/><rect x="694.62" y="20" width="1" height="3" fill="#b8bcc0"/><rect x="705.00" y="16" width="1" height="7" fill="#9a9ea2"/><rect x="715.38" y="20" width="1" height="3" fill="#b8bcc0"/><rect x="0" y="22.5" width="722" height="1" fill="#d8dcdf"/></svg>
<div class="t" style="left:629.48px;top:766.12px;font-size:9.5px;color:#555;transform-origin:50% 0;">1s</div>
<div class="t" style="left:670.98px;top:766.12px;font-size:9.5px;color:#555;transform-origin:50% 0;">2s</div>
<div class="t" style="left:712.48px;top:766.12px;font-size:9.5px;color:#555;transform-origin:50% 0;">3s</div>
<div class="t" style="left:753.98px;top:766.12px;font-size:9.5px;color:#555;transform-origin:50% 0;">4s</div>
<div class="t" style="left:795.48px;top:766.12px;font-size:9.5px;color:#555;transform-origin:50% 0;">5s</div>
<div class="t" style="left:836.98px;top:766.12px;font-size:9.5px;color:#555;transform-origin:50% 0;">6s</div>
<div class="t" style="left:878.48px;top:766.12px;font-size:9.5px;color:#555;transform-origin:50% 0;">7s</div>
<div class="t" style="left:919.98px;top:766.12px;font-size:9.5px;color:#555;transform-origin:50% 0;">8s</div>
<div class="t" style="left:961.48px;top:766.12px;font-size:9.5px;color:#555;transform-origin:50% 0;">9s</div>
<div class="t" style="left:1000.34px;top:766.12px;font-size:9.5px;color:#555;transform:scaleX(0.947);transform-origin:50% 0;">10s</div>
<div class="t" style="left:1042.19px;top:766.12px;font-size:9.5px;color:#555;transform-origin:50% 0;">11s</div>
<div class="t" style="left:1083.34px;top:766.12px;font-size:9.5px;color:#555;transform:scaleX(0.947);transform-origin:50% 0;">12s</div>
<div class="t" style="left:1124.84px;top:766.12px;font-size:9.5px;color:#555;transform:scaleX(0.947);transform-origin:50% 0;">13s</div>
<div class="t" style="left:1166.34px;top:766.12px;font-size:9.5px;color:#555;transform:scaleX(0.947);transform-origin:50% 0;">14s</div>
<div class="t" style="left:1207.84px;top:766.12px;font-size:9.5px;color:#555;transform:scaleX(0.947);transform-origin:50% 0;">15s</div>
<div class="t" style="left:1249.34px;top:766.12px;font-size:9.5px;color:#555;transform:scaleX(0.947);transform-origin:50% 0;">16s</div>
<div class="t" style="left:1290.84px;top:766.12px;font-size:9.5px;color:#555;transform:scaleX(0.947);transform-origin:50% 0;">17s</div>
<svg class="a" style="left:588px;top:776px" width="11" height="8" viewBox="0 0 11 8"><path d="M0.5 0.5H10.5L5.5 7.5Z" fill="#0b84d8"/></svg>
<div class="a" style="left:592.5px;top:783px;width:1.5px;height:63px;background:#8fb4d4"></div>
<div class="a" style="left:800px;top:784px;width:1px;height:62px;background:#c8ccd0"></div>
<div class="t" style="left:806px;top:796.63px;font-size:9px;color:#d0d4d8;transform-origin:0 0;">End</div>
<div class="a" style="left:450px;top:818px;width:865px;height:1px;background:#eef0f2"></div>
<div class="a" style="left:465px;top:798px;width:16px;height:16px;background:#fff;border:1px solid #dfe2e5"></div>
<div class="a" style="left:496px;top:798px;width:16px;height:16px;background:#fff;border:1px solid #dfe2e5"></div>
<div class="a" style="left:465px;top:823px;width:16px;height:16px;background:#fff;border:1px solid #dfe2e5"></div>
<div class="a" style="left:496px;top:823px;width:16px;height:16px;background:#fff;border:1px solid #dfe2e5"></div>
<svg class="a" style="left:467px;top:801px" width="12" height="10" viewBox="0 0 12 10"><path d="M1 5 Q6 -0.5 11 5 Q6 10.5 1 5Z" fill="none" stroke="#444" stroke-width="1.3"/><circle cx="6" cy="5" r="2" fill="#444"/></svg>
<svg class="a" style="left:467px;top:826px" width="12" height="10" viewBox="0 0 12 10"><path d="M1 5 Q6 -0.5 11 5 Q6 10.5 1 5Z" fill="none" stroke="#c8ccd0" stroke-width="1.3"/><circle cx="6" cy="5" r="2" fill="#c8ccd0"/></svg>
<div class="t" style="left:530px;top:801.28px;font-size:10.5px;color:#444;transform:scaleX(0.958);transform-origin:0 0;">Txt_Health...</div>
<div class="t" style="left:530.5px;top:826.28px;font-size:10.5px;color:#444;transform:scaleX(0.919);transform-origin:0 0;">Rectangle 1</div>
<div class="a" style="left:594px;top:796px;width:206px;height:20px;background:linear-gradient(#f0f2f4,#e4e7ea);border:1px solid #cfd4d8"></div>
<div class="a" style="left:594px;top:821px;width:206px;height:20px;background:linear-gradient(#f0f2f4,#e4e7ea);border:1px solid #cfd4d8"></div>
<svg class="a" style="left:600px;top:799px" width="15" height="13" viewBox="0 0 15 13"><rect x="0.5" y="0.5" width="14" height="12" fill="#fff" stroke="#777"/><text x="3" y="8.5" font-family="Liberation Sans" font-size="7" fill="#666">A</text><path d="M9 3V10" stroke="#999" stroke-width="0.8"/></svg>
<svg class="a" style="left:600px;top:824px" width="15" height="13" viewBox="0 0 15 13"><rect x="0.5" y="0.5" width="14" height="12" fill="#fff" stroke="#777"/><rect x="2" y="7" width="11" height="4" fill="#dde3ea"/></svg>
<div class="t" style="left:622px;top:801.28px;font-size:10.5px;color:#555;transform-origin:0 0;">Healthy Habits</div>
<div class="t" style="left:622px;top:826.28px;font-size:10.5px;color:#555;transform:scaleX(0.946);transform-origin:0 0;">Rectangle 1</div>
<svg class="a" style="left:790px;top:802px" width="6" height="8" viewBox="0 0 6 8"><path d="M0.5 0.5V7.5L5 4Z" fill="#444"/></svg>
<svg class="a" style="left:790px;top:827px" width="6" height="8" viewBox="0 0 6 8"><path d="M0.5 0.5V7.5L5 4Z" fill="#444"/></svg>
<div class="a" style="left:1315px;top:762px;width:17px;height:84px;background:#e9ecef"></div>
<div class="a" style="left:1315px;top:762px;width:17px;height:18px;background:#fff;border:1px solid #e3e6e9"></div>
<svg class="a" style="left:1319px;top:768px" width="8" height="6" viewBox="0 0 8 6"><path d="M4 0.5L7.5 5H0.5Z" fill="#b8bcc0"/></svg>
<div class="a" style="left:1315px;top:780px;width:17px;height:17px;background:#a9aeb3"></div>
<svg class="a" style="left:1319px;top:784px" width="9" height="9" viewBox="0 0 9 9"><path d="M0 1.5H9M0 4.5H9M0 7.5H9" stroke="#e8eaec" stroke-width="1.2"/></svg>
<div class="a" style="left:1315px;top:826px;width:17px;height:20px;background:#fff;border:1px solid #e3e6e9"></div>
<svg class="a" style="left:1319px;top:833px" width="8" height="6" viewBox="0 0 8 6"><path d="M0.5 0.5H7.5L4 5Z" fill="#b8bcc0"/></svg>
<div class="a" style="left:1332px;top:266px;width:242px;height:580px;background:#f2f5f8"></div>
<div class="a" style="left:1331px;top:266px;width:1px;height:460px;background:#a9afb3"></div>
<div class="t" style="left:1351.5px;top:276.61px;font-size:13px;color:#555;transform:scaleX(1.038);transform-origin:0 0;">Triggers</div>
<svg class="a" style="left:1531px;top:281px" width="8" height="5" viewBox="0 0 8 5"><path d="M0.5 0.5H7.5L4 4.5Z" fill="#c0c4c8"/></svg>
<svg class="a" style="left:1546px;top:277px" width="12" height="11" viewBox="0 0 12 11"><rect x="0.5" y="3.5" width="9" height="7" fill="none" stroke="#9aa0a6"/><path d="M2.5 3.5V0.5H11.5V7.5H9.5" fill="none" stroke="#9aa0a6"/><path d="M0.5 5.5H9.5" stroke="#9aa0a6"/></svg>
<div class="a" style="left:1352px;top:298px;width:24px;height:26px;background:#fdfdfe;border:1px solid #dcdfe3"></div>
<svg class="a" style="left:1355px;top:302px" width="18" height="18" viewBox="0 0 18 18"><path d="M4 2H10.5L14 5.5V16H4Z" fill="#fff" stroke="#666" stroke-width="1.1"/><path d="M10.5 2V5.5H14" fill="none" stroke="#666"/></svg>
<div class="a" style="left:1378px;top:298px;width:24px;height:26px;background:#fdfdfe;border:1px solid #dcdfe3"></div>
<svg class="a" style="left:1381px;top:302px" width="18" height="18" viewBox="0 0 18 18"><rect x="3" y="4" width="11" height="12" fill="#eee" stroke="#666" stroke-width="1.1"/><path d="M5 8H10M5 11H10M5 14H9" stroke="#888"/><path d="M9 11 L15.5 3.5 L17 5 L10.5 12.5 L8.5 13Z" fill="#f0b030" stroke="#b07020" stroke-width="0.7"/></svg>
<div class="a" style="left:1404px;top:298px;width:24px;height:26px;background:#fdfdfe;border:1px solid #dcdfe3"></div>
<svg class="a" style="left:1407px;top:302px" width="18" height="18" viewBox="0 0 18 18"><path d="M3 3H9L11 5V13H3Z" fill="#fff" stroke="#777"/><path d="M7 6H13L15 8V16H7Z" fill="#fff" stroke="#777"/><path d="M9 10H13M9 12H13M9 14H13" stroke="#999" stroke-width="0.8"/></svg>
<div class="a" style="left:1430px;top:298px;width:24px;height:26px;background:#fdfdfe;border:1px solid #dcdfe3"></div>
<svg class="a" style="left:1433px;top:302px" width="18" height="18" viewBox="0 0 18 18"><rect x="3" y="4" width="9" height="11" fill="#fff" stroke="#888"/><rect x="5.5" y="2.5" width="4" height="3" fill="#ccc" stroke="#888" stroke-width="0.8"/><path d="M8 8H13L15 10V17H8Z" fill="#fff" stroke="#888"/></svg>
<div class="a" style="left:1456px;top:298px;width:24px;height:26px;background:#fdfdfe;border:1px solid #dcdfe3"></div>
<svg class="a" style="left:1459px;top:302px" width="18" height="18" viewBox="0 0 18 18"><path d="M4 5H14M7 5V3H11V5M5 5L6 16H12L13 5" fill="none" stroke="#777" stroke-width="1.2"/><path d="M8 7V14M10 7V14" stroke="#999"/></svg>
<div class="a" style="left:1482px;top:298px;width:24px;height:26px;background:#fdfdfe;border:1px solid #dcdfe3"></div>
<svg class="a" style="left:1485px;top:302px" width="18" height="18" viewBox="0 0 18 18"><path d="M6 11.5L9 7.5L12 11.5Z" fill="#555"/></svg>
<div class="a" style="left:1509px;top:298px;width:24px;height:26px;background:#fdfdfe;border:1px solid #dcdfe3"></div>
<svg class="a" style="left:1512px;top:302px" width="18" height="18" viewBox="0 0 18 18"><path d="M6 7.5H12L9 11.5Z" fill="#c8cacc"/></svg>
<div class="a" style="left:1535px;top:298px;width:24px;height:26px;background:#fdfdfe;border:1px solid #dcdfe3"></div>
<svg class="a" style="left:1538px;top:302px" width="18" height="18" viewBox="0 0 18 18"><rect x="2.5" y="2.5" width="14" height="13" fill="#fff" stroke="#777"/><rect x="2.5" y="2.5" width="14" height="3" fill="#888"/><text x="4" y="13.5" font-family="Liberation Sans" font-size="8" fill="#777">{x}</text></svg>
<div class="a" style="left:1335px;top:335px;width:239px;height:1px;background:#e3e6ea"></div>
<div class="a" style="left:1335px;top:336px;width:222px;height:301px;background:#fff"></div>
<div class="t" style="left:1352px;top:348.25px;font-size:11.5px;color:#5a5a5a;font-weight:bold;transform:scaleX(0.920);transform-origin:0 0;">Slide Triggers</div>
<div class="t" style="left:1352.3px;top:372.49px;font-size:10.5px;color:#484848;transform-origin:0 0;">Change state of  the next button to</div>
<div class="t" style="left:1360px;top:386.38px;font-size:10.5px;color:#3a96d6;transform-origin:0 0;text-decoration:underline;">Hidden</div>
<div class="t" style="left:1367px;top:399.99px;font-size:10.5px;color:#484848;transform:scaleX(0.977);transform-origin:0 0;">When the timeline starts</div>
<div class="t" style="left:1360px;top:413.88px;font-size:10.5px;color:#484848;transform:scaleX(0.972);transform-origin:0 0;">If tabs is</div>
<div class="t" style="left:1402.5px;top:413.88px;font-size:10.5px;color:#3a96d6;transform:scaleX(0.964);transform-origin:0 0;text-decoration:underline;">equal to</div>
<div class="t" style="left:1443px;top:413.88px;font-size:10.5px;color:#3a96d6;transform:scaleX(0.876);transform-origin:0 0;text-decoration:underline;">False</div>
<div class="t" style="left:1352.3px;top:435.49px;font-size:10.5px;color:#484848;transform-origin:0 0;">Change state of  the previous button to</div>
<div class="t" style="left:1360px;top:449.38px;font-size:10.5px;color:#3a96d6;transform-origin:0 0;text-decoration:underline;">Hidden</div>
<div class="t" style="left:1367px;top:462.99px;font-size:10.5px;color:#484848;transform:scaleX(0.977);transform-origin:0 0;">When the timeline starts</div>
<div class="t" style="left:1360px;top:476.88px;font-size:10.5px;color:#484848;transform:scaleX(0.972);transform-origin:0 0;">If tabs is</div>
<div class="t" style="left:1402.5px;top:476.88px;font-size:10.5px;color:#3a96d6;transform:scaleX(0.964);transform-origin:0 0;text-decoration:underline;">equal to</div>
<div class="t" style="left:1443px;top:476.88px;font-size:10.5px;color:#3a96d6;transform:scaleX(0.876);transform-origin:0 0;text-decoration:underline;">False</div>
<div class="t" style="left:1352.3px;top:498.79px;font-size:10.5px;color:#484848;transform-origin:0 0;">Change state of  the next button to</div>
<div class="t" style="left:1360px;top:512.59px;font-size:10.5px;color:#3a96d6;transform:scaleX(1.020);transform-origin:0 0;text-decoration:underline;">Normal</div>
<div class="t" style="left:1367px;top:526.49px;font-size:10.5px;color:#484848;transform:scaleX(0.972);transform-origin:0 0;">When the state of</div>
<div class="t" style="left:1360px;top:540.38px;font-size:10.5px;color:#484848;transform:scaleX(0.962);transform-origin:0 0;">Balance - "Pict... and</div>
<div class="t" style="left:1360px;top:554.09px;font-size:10.5px;color:#484848;transform:scaleX(0.956);transform-origin:0 0;">Eat well - "Pic... and</div>
<div class="t" style="left:1360px;top:567.88px;font-size:10.5px;color:#484848;transform:scaleX(0.927);transform-origin:0 0;">Exercise - "Pic... and</div>
<div class="t" style="left:1360px;top:581.69px;font-size:10.5px;color:#484848;transform:scaleX(0.977);transform-origin:0 0;">Get Away - "Pic... are</div>
<div class="t" style="left:1459.5px;top:581.69px;font-size:10.5px;color:#3a96d6;transform:scaleX(0.958);transform-origin:0 0;text-decoration:underline;">Visited</div>
<div class="t" style="left:1352.3px;top:603.49px;font-size:10.5px;color:#484848;transform-origin:0 0;">Change state of  the previous button to</div>
<div class="t" style="left:1360px;top:617.19px;font-size:10.5px;color:#3a96d6;transform:scaleX(1.020);transform-origin:0 0;text-decoration:underline;">Normal</div>
<div class="a" style="left:1335px;top:628px;width:222px;height:9px;overflow:hidden">
<div class="t" style="left:32px;top:2.49px;font-size:10.5px;color:#505050;transform:scaleX(0.972);transform-origin:0 0;">When the state of</div>
</div>
<div class="a" style="left:1557px;top:336px;width:17px;height:301px;background:#e9ecef"></div>
<div class="a" style="left:1557px;top:336px;width:17px;height:17px;background:#fff;border:1px solid #e3e6e9"></div>
<svg class="a" style="left:1561px;top:341px" width="8" height="6" viewBox="0 0 8 6"><path d="M4 0.5L7.5 5H0.5Z" fill="#b8bcc0"/></svg>
<div class="a" style="left:1557px;top:353px;width:17px;height:142px;background:#a5aba8"></div>
<svg class="a" style="left:1561px;top:419px" width="9" height="9" viewBox="0 0 9 9"><path d="M0 1.5H9M0 4.5H9M0 7.5H9" stroke="#d8dcda" stroke-width="1.2"/></svg>
<div class="a" style="left:1557px;top:620px;width:17px;height:17px;background:#fff;border:1px solid #e3e6e9"></div>
<svg class="a" style="left:1561px;top:625px" width="8" height="6" viewBox="0 0 8 6"><path d="M0.5 0.5H7.5L4 5Z" fill="#b8bcc0"/></svg>
<div class="a" style="left:1335px;top:637px;width:239px;height:1px;background:#e0e3e7"></div>
<div class="t" style="left:1351.5px;top:648.61px;font-size:13px;color:#555;transform-origin:0 0;">Slide Layers</div>
<svg class="a" style="left:1530px;top:652px" width="8" height="6" viewBox="0 0 8 6"><path d="M0.5 0.5H7.5L4 4.5Z" fill="#1a7ac2"/></svg>
<svg class="a" style="left:1546px;top:649px" width="12" height="11" viewBox="0 0 12 11"><rect x="0.5" y="3.5" width="9" height="7" fill="none" stroke="#9aa0a6"/><path d="M2.5 3.5V0.5H11.5V7.5H9.5" fill="none" stroke="#9aa0a6"/><path d="M0.5 5.5H9.5" stroke="#9aa0a6"/></svg>
<div class="a" style="left:1335px;top:672px;width:239px;height:1px;background:#e0e3e7"></div>
<div class="a" style="left:1335px;top:673px;width:222px;height:147px;background:#fff"></div>
<div class="a" style="left:1335px;top:673px;width:222px;height:4px;overflow:hidden">
<div class="a" style="left:17px;top:-12px;width:16px;height:16px;background:#fff;border:1px solid #dcdfe2"></div>
<div class="a" style="left:45px;top:-10px;width:27px;height:13px;background:linear-gradient(90deg,#e03040 50%,#333 50%)"></div>
</div>
<div class="a" style="left:1352px;top:687.8px;width:16px;height:16px;background:#fff;border:1px solid #dcdfe2"></div>
<svg class="a" style="left:1380px;top:686.3px" width="27" height="19" viewBox="0 0 27 19"><rect width="27" height="19" fill="#b06030"/><path d="M14 3 L20 2 L24 8 L21 14 L16 12Z" fill="#e8e4dc" opacity="0.85"/><path d="M18 12 L27 10 V19 H15Z" fill="#2a2420" opacity="0.8"/><path d="M0 0 H13 L14 3 L12 19 H0Z" fill="#1a8ee0"/></svg>
<div class="t" style="left:1418.8px;top:691.28px;font-size:10.5px;color:#484848;transform:scaleX(0.965);transform-origin:0 0;">Get  Away</div>
<div class="a" style="left:1352px;top:715.4px;width:16px;height:16px;background:#fff;border:1px solid #dcdfe2"></div>
<svg class="a" style="left:1380px;top:713.9px" width="27" height="19" viewBox="0 0 27 19"><rect width="27" height="19" fill="#8a9090"/><path d="M14 3 L20 2 L24 8 L21 14 L16 12Z" fill="#dce4e4" opacity="0.85"/><path d="M18 12 L27 10 V19 H15Z" fill="#303838" opacity="0.8"/><path d="M0 0 H13 L14 3 L12 19 H0Z" fill="#14a890"/></svg>
<div class="t" style="left:1418.8px;top:718.88px;font-size:10.5px;color:#484848;transform:scaleX(1.018);transform-origin:0 0;">Exercise</div>
<div class="a" style="left:1352px;top:743px;width:16px;height:16px;background:#fff;border:1px solid #dcdfe2"></div>
<svg class="a" style="left:1380px;top:741.5px" width="27" height="19" viewBox="0 0 27 19"><rect width="27" height="19" fill="#3a3028"/><path d="M14 3 L20 2 L24 8 L21 14 L16 12Z" fill="#b8b0a0" opacity="0.85"/><path d="M18 12 L27 10 V19 H15Z" fill="#1a1612" opacity="0.8"/><path d="M0 0 H13 L14 3 L12 19 H0Z" fill="#e8a838"/></svg>
<div class="t" style="left:1418.8px;top:746.49px;font-size:10.5px;color:#484848;transform:scaleX(1.081);transform-origin:0 0;">Balance</div>
<div class="a" style="left:1352px;top:770px;width:188px;height:1px;background:#e3e6e9"></div>
<div class="t" style="left:1351.5px;top:776.25px;font-size:11.5px;color:#4a4a4a;transform:scaleX(0.946);transform-origin:0 0;">Base Layer</div>
<div class="a" style="left:1337px;top:792px;width:217px;height:26.5px;background:#0a84d6"></div>
<div class="a" style="left:1352px;top:798px;width:16px;height:16px;background:#fff"></div>
<svg class="a" style="left:1354px;top:800px" width="12" height="12" viewBox="0 0 12 12"><path d="M2 6.5L5 9.5L10.5 3" fill="none" stroke="#0a6ab8" stroke-width="1.8"/></svg>
<svg class="a" style="left:1380px;top:796px" width="27" height="19" viewBox="0 0 27 19"><rect width="27" height="19" fill="#1e2a34"/><g transform="translate(13.5 9.5)"><circle r="6.5" fill="none" stroke="#f8ab1c" stroke-width="3" stroke-dasharray="8 2.2"/><path d="M-6.5 0 A6.5 6.5 0 0 1 0 -6.5" fill="none" stroke="#0a8fe8" stroke-width="3"/><path d="M6.5 0 A6.5 6.5 0 0 1 0 6.5" fill="none" stroke="#ff0a3c" stroke-width="3"/><path d="M0 6.5 A6.5 6.5 0 0 1 -6.5 0" fill="none" stroke="#0eba98" stroke-width="3"/></g></svg>
<div class="t" style="left:1418.8px;top:801.49px;font-size:10.5px;color:#fff;transform:scaleX(0.985);transform-origin:0 0;">Tabs Interaction</div>
<svg class="a" style="left:1520px;top:799px" width="14" height="13" viewBox="0 0 14 13"><g transform="translate(7 6.5)" fill="#fff"><circle r="4.3"/><g id="gt"><rect x="-1.3" y="-6.5" width="2.6" height="13"/><rect x="-6.5" y="-1.3" width="13" height="2.6"/><rect x="-1.3" y="-6.5" width="2.6" height="13" transform="rotate(45)"/><rect x="-1.3" y="-6.5" width="2.6" height="13" transform="rotate(-45)"/></g><circle r="1.8" fill="#0a84d6"/></g></svg>
<div class="a" style="left:1557px;top:673px;width:17px;height:147px;background:#e9ecef"></div>
<div class="a" style="left:1557px;top:674px;width:17px;height:17px;background:#fff;border:1px solid #e3e6e9"></div>
<svg class="a" style="left:1561px;top:679px" width="8" height="6" viewBox="0 0 8 6"><path d="M4 0.5L7.5 5H0.5Z" fill="#b8bcc0"/></svg>
<div class="a" style="left:1557px;top:702px;width:17px;height:99px;background:#a9aeb3"></div>
<svg class="a" style="left:1561px;top:747px" width="9" height="9" viewBox="0 0 9 9"><path d="M0 1.5H9M0 4.5H9M0 7.5H9" stroke="#e0e3e6" stroke-width="1.2"/></svg>
<div class="a" style="left:1557px;top:801px;width:17px;height:18px;background:#fff;border:1px solid #e3e6e9"></div>
<svg class="a" style="left:1561px;top:807px" width="8" height="6" viewBox="0 0 8 6"><path d="M0.5 0.5H7.5L4 5Z" fill="#b8bcc0"/></svg>
<div class="a" style="left:1335px;top:819.5px;width:239px;height:1px;background:#e3e6e9"></div>
<div class="a" style="left:1352px;top:826px;width:23px;height:22px;background:#fdfdfe;border:1px solid #dcdfe3"></div>
<svg class="a" style="left:1353px;top:826px" width="21" height="22" viewBox="0 0 21 22"><path d="M5 4H11.5L15 7.5V22H5Z" fill="#fff" stroke="#777" stroke-width="1.1"/></svg>
<div class="a" style="left:1378px;top:826px;width:23px;height:22px;background:#fdfdfe;border:1px solid #dcdfe3"></div>
<svg class="a" style="left:1379px;top:826px" width="21" height="22" viewBox="0 0 21 22"><path d="M4 12 L12 6 L18 10 V22 H4Z" fill="#eee" stroke="#777" stroke-width="1.1"/><path d="M8 16 L11 19 L17 12" fill="none" stroke="#3aa54a" stroke-width="2"/></svg>
<div class="a" style="left:1404px;top:826px;width:23px;height:22px;background:#fdfdfe;border:1px solid #dcdfe3"></div>
<svg class="a" style="left:1405px;top:826px" width="21" height="22" viewBox="0 0 21 22"><path d="M5 6H11L13 8V22H5Z" fill="#fff" stroke="#bbb"/><path d="M8 9H14L16 11V22H8Z" fill="#fff" stroke="#bbb"/></svg>
<div class="a" style="left:1430px;top:826px;width:23px;height:22px;background:#fdfdfe;border:1px solid #dcdfe3"></div>
<svg class="a" style="left:1431px;top:826px" width="21" height="22" viewBox="0 0 21 22"><rect x="4" y="7" width="9" height="15" fill="#fff" stroke="#bbb"/><rect x="6.5" y="5" width="4" height="3" fill="#ddd" stroke="#bbb" stroke-width="0.8"/><path d="M9 11H14L16 13V22H9Z" fill="#fff" stroke="#bbb"/></svg>
<div class="a" style="left:1456px;top:826px;width:23px;height:22px;background:#fdfdfe;border:1px solid #dcdfe3"></div>
<svg class="a" style="left:1457px;top:826px" width="21" height="22" viewBox="0 0 21 22"><path d="M5 8H17M8 8V6H14V8M6 8L7 22H15L16 8" fill="none" stroke="#bbb" stroke-width="1.2"/></svg>
<div class="a" style="left:1485px;top:829px;width:16px;height:17px;background:#fff;border:1px solid #dcdfe2"></div>
<svg class="a" style="left:1486px;top:832px" width="14" height="12" viewBox="0 0 14 12"><path d="M2 6.5L5.5 10L12 2.5" fill="none" stroke="#1a7ac2" stroke-width="1.8"/></svg>
<div class="t" style="left:1508px;top:837.49px;font-size:10.5px;color:#505050;transform:scaleX(1.018);transform-origin:0 0;">Dim</div>
<div class="a" style="left:319px;top:846px;width:1255px;height:26px;background:#323237"></div>
<div class="t" style="left:328px;top:855.20px;font-size:10px;color:#b4b4b8;transform:scaleX(0.971);transform-origin:0 0;">Slide 5 of 10</div>
<div class="t" style="left:396px;top:855.20px;font-size:10px;color:#b4b4b8;transform:scaleX(1.030);transform-origin:0 0;">"Untitled Slide"</div>
<svg class="a" style="left:1341px;top:853px" width="11" height="11" viewBox="0 0 11 11"><rect x="0" y="0" width="4.5" height="4.5" fill="#c8c8cc"/><rect x="6" y="0" width="4.5" height="4.5" fill="#c8c8cc"/><rect x="0" y="6" width="4.5" height="4.5" fill="#c8c8cc"/><rect x="6" y="6" width="4.5" height="4.5" fill="#c8c8cc"/></svg>
<div class="a" style="left:1357px;top:849px;width:21px;height:20px;background:#3c3c42"></div>
<svg class="a" style="left:1361px;top:853px" width="12" height="11" viewBox="0 0 12 11"><rect x="0.5" y="0.5" width="11" height="10" fill="none" stroke="#c8c8cc"/><rect x="0.5" y="0.5" width="3" height="10" fill="#c8c8cc"/><rect x="5" y="2.5" width="5" height="4" fill="#c8c8cc"/></svg>
<svg class="a" style="left:1382px;top:853px" width="12" height="12" viewBox="0 0 12 12"><rect x="0.5" y="1" width="11" height="6" fill="none" stroke="#c8c8cc"/><rect x="0" y="0" width="12" height="1.5" fill="#c8c8cc"/><path d="M6 7V11M3 11H9" stroke="#c8c8cc"/></svg>
<div class="t" style="left:1401px;top:855.20px;font-size:10px;color:#b4b4b8;transform-origin:0 0;">88%</div>
<div class="a" style="left:1430px;top:858.5px;width:6px;height:1.5px;background:#c8c8cc"></div>
<div class="a" style="left:1440px;top:858.5px;width:87px;height:1.2px;background:#c8c8cc"></div>
<svg class="a" style="left:1473px;top:854px" width="12" height="11" viewBox="0 0 12 11"><circle cx="5" cy="5.5" r="3.2" fill="#323237" stroke="#d8d8dc" stroke-width="1.3"/><path d="M10.5 1.5V9.5" stroke="#d8d8dc" stroke-width="1.2"/></svg>
<svg class="a" style="left:1529px;top:854px" width="10" height="10" viewBox="0 0 10 10"><path d="M5 1V9M1 5H9" stroke="#d0d0d4" stroke-width="1.6"/></svg>
<svg class="a" style="left:1544px;top:852px" width="13" height="13" viewBox="0 0 13 13"><rect x="0.6" y="0.6" width="11.8" height="11.8" fill="none" stroke="#c8c8cc" stroke-width="1.2"/><path d="M3 3L5.5 5.5M10 3L7.5 5.5M3 10L5.5 7.5M10 10L7.5 7.5" stroke="#c8c8cc" stroke-width="1.2"/></svg>
</div></body></html>
